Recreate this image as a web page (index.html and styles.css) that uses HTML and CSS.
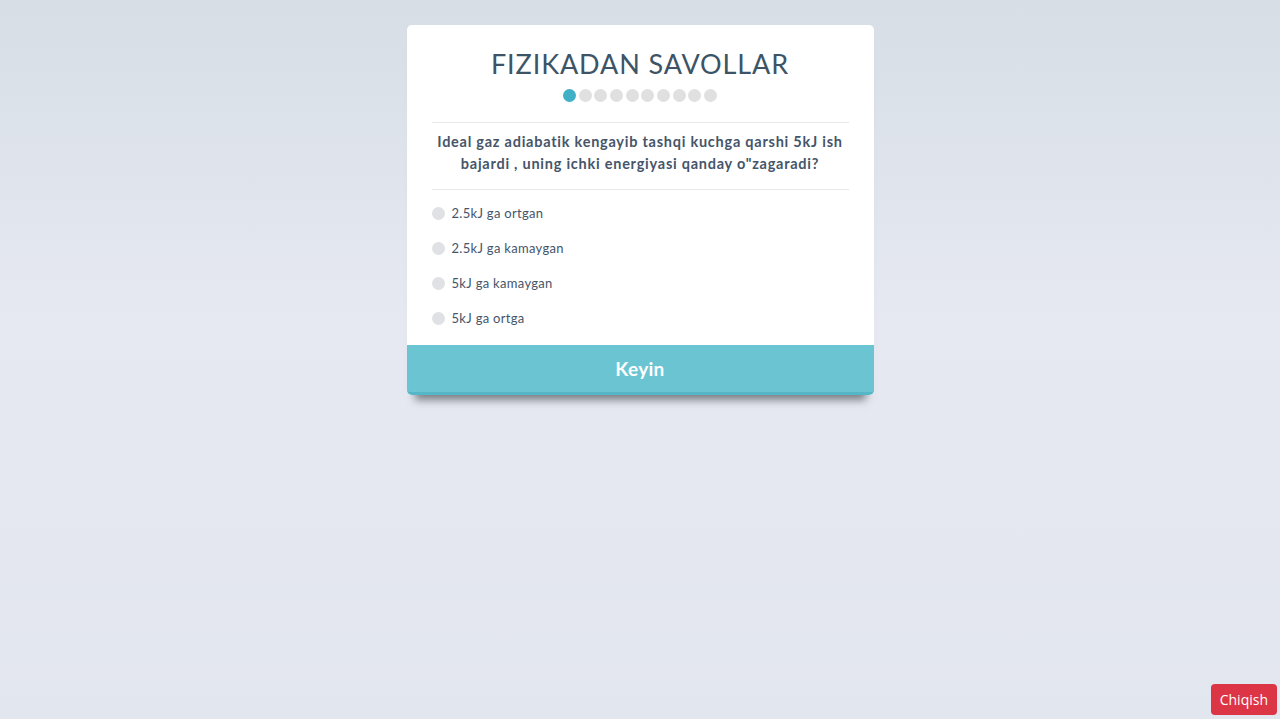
FILE: index.html
```html
<!DOCTYPE html>
<html lang="uz">
<head>
<meta charset="utf-8">
<title>Fizikadan savollar</title>
<link rel="stylesheet" href="styles.css">
</head>
<body>
<main class="page">
  <section class="quiz">
    <div class="quiz-body">
      <h1 class="title">FIZIKADAN SAVOLLAR</h1>
      <div class="dots">
        <span class="dot active"></span><span class="dot"></span><span class="dot"></span><span class="dot"></span><span class="dot"></span><span class="dot"></span><span class="dot"></span><span class="dot"></span><span class="dot"></span><span class="dot"></span>
      </div>
      <p class="question">Ideal gaz adiabatik kengayib tashqi kuchga qarshi 5kJ ish bajardi , uning ichki energiyasi qanday o"zagaradi?</p>
      <ul class="options">
        <li class="option"><span class="radio"></span>2.5kJ ga ortgan</li>
        <li class="option"><span class="radio"></span>2.5kJ ga kamaygan</li>
        <li class="option"><span class="radio"></span>5kJ ga kamaygan</li>
        <li class="option"><span class="radio"></span>5kJ ga ortga</li>
      </ul>
    </div>
    <button class="next">Keyin</button>
  </section>
</main>
<button class="exit">Chiqish</button>
</body>
</html>
```
FILE: styles.css
```css
html, body {
  margin: 0;
  padding: 0;
  height: 100%;
}
body {
  background: linear-gradient(180deg, #d7dee6 0%, #e6e9f2 45%, #e2e6ee 100%);
  font-family: "Lato", "Open Sans", sans-serif;
  color: #45556a;
  overflow: hidden;
}
.page {
  display: flex;
  justify-content: center;
  padding-top: 25px;
}
.quiz {
  width: 467px;
  background: #fff;
  border-radius: 5px;
  box-shadow: 0 13px 8px -8px rgba(50, 55, 60, 0.6);
  display: flex;
  flex-direction: column;
}
.quiz-body {
  padding: 22px 25px 18px;
}
.title {
  margin: 0;
  text-align: center;
  font-weight: 400;
  font-size: 27px;
  letter-spacing: 0.9px;
  color: #3d5466;
  line-height: 34px;
}
.dots {
  display: flex;
  justify-content: center;
  gap: 2.7px;
  margin-top: 8px;
  padding-bottom: 20px;
  border-bottom: 1px solid #e8e8e8;
}
.dot {
  width: 13px;
  height: 13px;
  border-radius: 50%;
  background: #e0e0e0;
}
.dot.active {
  background: #3fb0c6;
}
.question {
  margin: 0;
  padding: 8px 0 14px;
  text-align: center;
  font-weight: 700;
  font-size: 14.5px;
  line-height: 22px;
  letter-spacing: 0.75px;
  color: #45556a;
  border-bottom: 1px solid #e8e8e8;
}
.options {
  list-style: none;
  margin: 0;
  padding: 14px 0 0;
  display: flex;
  flex-direction: column;
  gap: 17px;
}
.option {
  display: flex;
  align-items: center;
  gap: 7px;
  font-size: 13px;
  line-height: 18px;
  letter-spacing: 0.3px;
  color: #45556a;
}
.radio {
  width: 13px;
  height: 13px;
  border-radius: 50%;
  background: #dfe1e5;
}
.next {
  border: none;
  border-bottom: 3px solid #55b6c6;
  background: #6ac4d2;
  color: #fff;
  font-family: "Lato", "Open Sans", sans-serif;
  font-weight: 700;
  font-size: 19px;
  height: 50px;
  border-radius: 0 0 5px 5px;
  padding: 0;
  letter-spacing: 0.3px;
}
.exit {
  position: fixed;
  right: 3px;
  bottom: 4px;
  background: #dc3545;
  color: #fff;
  border: none;
  border-radius: 4px;
  font-family: "Open Sans", "Noto Sans", sans-serif;
  font-size: 14px;
  padding: 0 9px;
  height: 31px;
}
```
